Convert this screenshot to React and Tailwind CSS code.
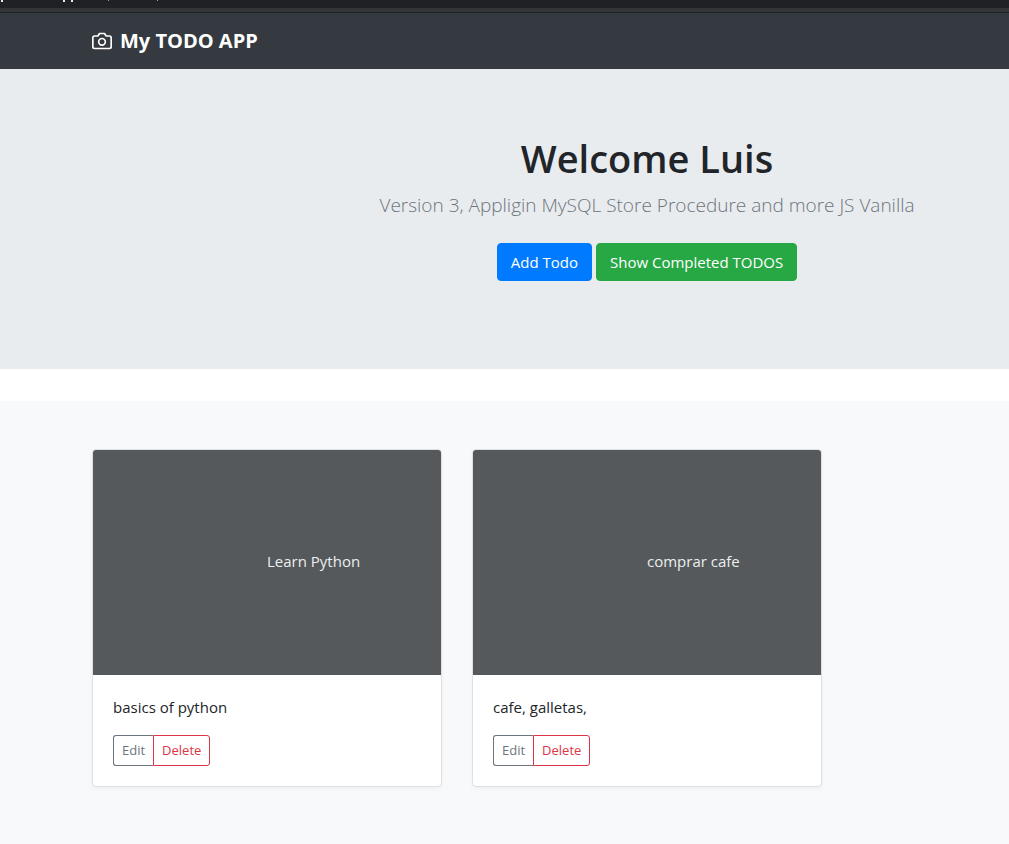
import React from "react";

const todos = [
  { id: 1, title: "Learn Python", description: "basics of python" },
  { id: 2, title: "comprar cafe", description: "cafe, galletas," },
];

function CameraIcon() {
  return (
    <svg
      className="mr-2 h-5 w-5"
      viewBox="0 0 24 24"
      fill="none"
      stroke="currentColor"
      strokeWidth="2"
      strokeLinecap="round"
      strokeLinejoin="round"
      aria-hidden="true"
    >
      <path d="M23 19a2 2 0 0 1-2 2H3a2 2 0 0 1-2-2V8a2 2 0 0 1 2-2h4l2-3h6l2 3h4a2 2 0 0 1 2 2z" />
      <circle cx="12" cy="13" r="4" />
    </svg>
  );
}

function BrowserEdge() {
  return (
    <div>
      <div className="flex h-2 items-end overflow-hidden bg-[#202124]">
        <svg className="h-2 w-44" viewBox="0 0 176 8" fill="#e8eaed" aria-hidden="true">
          <rect x="1" y="0" width="2" height="2" />
          <rect x="63" y="0" width="2" height="2" />
          <rect x="71" y="0" width="2" height="2" />
          <rect x="108" y="0" width="1" height="1" opacity="0.6" />
          <rect x="157" y="0" width="1" height="1" opacity="0.6" />
        </svg>
      </div>
      <div className="h-[5px] border-b border-[#202124] bg-[#35363a]" />
    </div>
  );
}

function TodoCard({ todo }) {
  return (
    <article className="w-[350px] overflow-hidden rounded border border-[#dee0e3] bg-white shadow-[0_2px_4px_rgba(0,0,0,0.04)]">
      <div className="flex h-[225px] items-center bg-[#55595c] pb-1 pl-[50%]">
        <h2 className="text-[15px] leading-6 text-[#eceeef]">{todo.title}</h2>
      </div>
      <div className="p-5">
        <p className="mb-4 text-[15px] leading-6">{todo.description}</p>
        <div className="flex text-[13px] leading-[21px]">
          <button className="rounded-l-[3px] border border-r-0 border-[#6c757d] px-2 py-1 text-[#6c757d]">
            Edit
          </button>
          <button className="rounded-r-[3px] border border-[#dc3545] px-2 py-1 text-[#dc3545]">
            Delete
          </button>
        </div>
      </div>
    </article>
  );
}

export default function App() {
  return (
    <div className="flex min-h-screen flex-col overflow-x-hidden bg-white font-['Open_Sans',sans-serif] text-[#212529]">
      <BrowserEdge />
      <header className="bg-[#343a40] pl-[92px] text-white">
        <div className="flex h-14 items-center">
          <a href="#" className="flex items-center text-[20px] leading-[30px] font-bold">
            <CameraIcon />
            My TODO APP
          </a>
        </div>
      </header>
      <main className="flex grow flex-col">
        <section className="mb-8 bg-[#e9ecef] pt-[65px] pb-[88px] pl-[285px] text-center">
          <h1 className="mb-2 text-[38px] leading-[48px] font-semibold">Welcome Luis</h1>
          <p className="mb-[15px] text-[19px] leading-[30px] font-light text-[#6c757d]">
            Version 3, Appligin MySQL Store Procedure and more JS Vanilla
          </p>
          <div className="flex justify-center gap-1 pt-2 text-[15px] leading-6 text-white">
            <button className="rounded border border-[#007bff] bg-[#007bff] px-[13px] py-1.5">Add Todo</button>
            <button className="rounded border border-[#28a745] bg-[#28a745] px-[13px] py-1.5">
              Show Completed TODOS
            </button>
          </div>
        </section>
        <section className="grow bg-[#f8f9fa] py-12 pl-[92px]">
          <div className="flex flex-wrap gap-[30px]">
            {todos.map((todo) => (
              <TodoCard key={todo.id} todo={todo} />
            ))}
          </div>
        </section>
      </main>
    </div>
  );
}
